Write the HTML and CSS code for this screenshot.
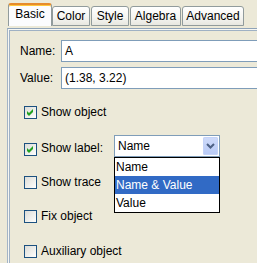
FILE: index.html
```html
<!DOCTYPE html>
<html>
<head>
<meta charset="utf-8">
<link rel="stylesheet" href="styles.css">
</head>
<body>
<div class="tabs">
  <div class="tab active">Basic</div>
  <div class="tab t-color">Color</div>
  <div class="tab t-style">Style</div>
  <div class="tab t-alg">Algebra</div>
  <div class="tab t-adv">Advanced</div>
</div>
<div class="panel">
  <div class="field-row">
    <span class="lbl">Name:</span>
    <div class="input">A</div>
  </div>
  <div class="field-row second">
    <span class="lbl">Value:</span>
    <div class="input">(1.38, 3.22)</div>
  </div>
  <div class="check-row r-object">
    <span class="box"><svg width="11" height="11" viewBox="0 0 11 11"><polygon points="2,4 4,6 8,2 8,5 4,9 2,7" fill="#21A121"/></svg></span>
    <span class="ctext">Show object</span>
  </div>
  <div class="check-row r-label">
    <span class="box"><svg width="11" height="11" viewBox="0 0 11 11"><polygon points="2,4 4,6 8,2 8,5 4,9 2,7" fill="#21A121"/></svg></span>
    <span class="ctext wide">Show label:</span>
    <div class="combo">
      <span class="combo-text">Name</span>
      <span class="arrow"><svg width="15" height="18" viewBox="0 0 15 18"><polyline points="4,7 7.5,10.5 11,7" fill="none" stroke="#4D6185" stroke-width="2"/></svg></span>
      <ul class="list">
        <li>Name</li>
        <li class="sel">Name &amp; Value</li>
        <li>Value</li>
      </ul>
    </div>
  </div>
  <div class="check-row r-trace">
    <span class="box"></span>
    <span class="ctext">Show trace</span>
  </div>
  <div class="check-row r-fix">
    <span class="box"></span>
    <span class="ctext">Fix object</span>
  </div>
  <div class="check-row r-aux">
    <span class="box"></span>
    <span class="ctext">Auxiliary object</span>
  </div>
</div>
</body>
</html>
```
FILE: styles.css
```css
* { box-sizing: border-box; margin: 0; padding: 0; }
html, body { width: 257px; height: 263px; overflow: hidden; }
body {
  background: #ECE9D8;
  font: 12px "Liberation Sans", Arial, sans-serif;
  color: #000;
}
.tabs {
  display: flex;
  align-items: flex-start;
  height: 28px;
  padding: 3px 0 0 8px;
}
.tab {
  flex: none;
  height: 20px;
  margin-top: 3px;
  border: 1px solid #919B9C;
  border-radius: 3px 3px 0 0;
  background: linear-gradient(#FFFFFF, #F4F4F0 60%, #E8E7E0);
  text-align: center;
  padding-top: 1px;
  line-height: 17px;
  white-space: nowrap;
}
.tab.active {
  width: 44px;
  height: 23px;
  margin-top: 0;
  border-top: 2px solid #E68B2C;
  border-bottom: none;
  box-shadow: inset 0 1px 0 #FFC73C;
  background: #FCFCFE;
  padding-top: 0;
  line-height: 19px;
}
.t-color { width: 38px; }
.t-style { width: 38px; margin-left: 1px; }
.t-alg { width: 51px; margin-left: 1px; }
.t-adv { width: 62px; margin-left: 1px; }

.panel {
  margin-left: 7px;
  width: 250px;
  height: 235px;
  border-top: 1px solid #8FA3B9;
  border-left: 1px solid #A3B4C6;
  box-shadow: inset 1px 1px 0 #F7F7F3, inset 2px 2px 0 #9FB1C4;
  padding: 11px 0 0 12px;
}
.field-row {
  display: flex;
  height: 22px;
}
.field-row.second { margin-top: 5px; }
.lbl {
  flex: none;
  width: 41px;
  line-height: 22px;
}
.input {
  flex: none;
  width: 197px;
  height: 22px;
  border: 1px solid #7F9DB9;
  background: #fff;
  padding: 1px 0 0 3px;
  line-height: 19px;
  white-space: nowrap;
}
.check-row {
  display: flex;
  align-items: flex-start;
  margin-left: 4px;
  height: 13px;
  line-height: 13px;
}
.box {
  width: 13px;
  height: 13px;
  flex: none;
  border: 1px solid #1C5180;
  background: linear-gradient(135deg, #DCDCD7, #F4F4F1 70%, #FFFFFF);
  margin-right: 4px;
}
.box svg { display: block; }
.ctext { white-space: nowrap; }
.r-object { margin-top: 17px; }
.r-label { margin-top: 16px; height: 22px; position: relative; z-index: 2; }
.r-label .box { margin-top: 8px; }
.r-label .ctext { margin-top: 7px; }
.ctext.wide { flex: none; width: 73px; }
.r-trace { margin-top: 19px; }
.r-fix { margin-top: 21px; }
.r-aux { margin-top: 22px; }

.combo {
  position: relative;
  width: 106px;
  height: 22px;
  flex: none;
  border: 1px solid #7F9DB9;
  background: #fff;
  padding-left: 3px;
  line-height: 20px;
}
.arrow {
  position: absolute;
  right: 1px;
  top: 1px;
  width: 15px;
  height: 18px;
  border-radius: 2px;
  background: linear-gradient(#CFDBFA, #B8CAF6);
  box-shadow: inset 0 0 0 1px #C4D3F8;
}
.arrow svg { display: block; }
.list {
  position: absolute;
  top: 21px;
  left: -1px;
  width: 106px;
  border: 1px solid #000;
  background: #fff;
  list-style: none;
}
.list li {
  height: 18px;
  line-height: 18px;
  padding-left: 1px;
  white-space: nowrap;
}
.list li.sel {
  background: #316AC5;
  color: #fff;
}
```
